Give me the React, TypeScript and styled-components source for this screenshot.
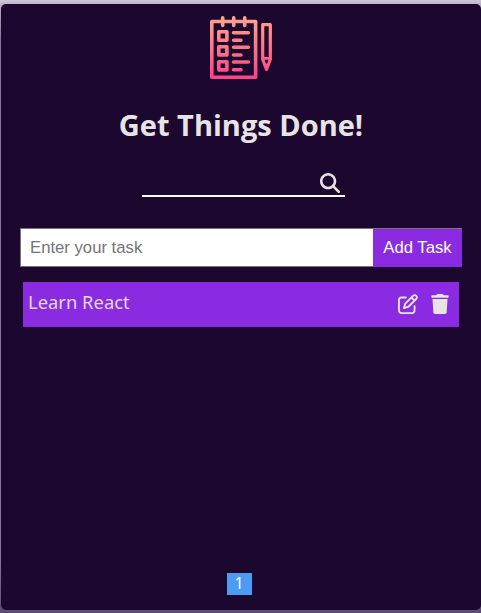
import React, { useState } from "react";
import styled, { createGlobalStyle } from "styled-components";
import { FaMagnifyingGlass, FaRegPenToSquare, FaTrash } from "react-icons/fa6";

const GlobalStyle = createGlobalStyle`
  * { box-sizing: border-box; }
  body {
    margin: 0;
    background: linear-gradient(#d0c8d6 0px, #b5aac0 6px, #85779a 40px, #85779a 560px, #5e4b74 613px);
    font-family: "Noto Sans", sans-serif;
  }
`;

const Page = styled.div`
  height: 613px;
  padding: 4px 0 3px 1px;
  overflow: hidden;
`;

const Card = styled.main`
  display: flex;
  flex-direction: column;
  align-items: center;
  height: 606px;
  padding: 12px 19px 15px;
  background: #1c072f;
  border-radius: 5px;
  color: #e8e3e5;
`;

const Title = styled.h1`
  margin: 22px 0 0;
  font-family: "Open Sans", "Noto Sans", sans-serif;
  font-size: 29px;
  line-height: 46px;
  font-weight: 700;
  white-space: nowrap;
`;

const SearchBar = styled.label`
  display: flex;
  align-items: flex-end;
  width: 203px;
  height: 28px;
  margin: 21px 0 0 5px;
  padding: 0 5px 2px 0;
  border-bottom: 2px solid #fff;
  svg { flex: none; font-size: 20px; }
`;

const SearchInput = styled.input`
  flex: 1;
  min-width: 0;
  border: 0;
  outline: 0;
  background: transparent;
  color: inherit;
`;

const TaskForm = styled.form`
  display: flex;
  align-self: stretch;
  height: 39px;
  margin-top: 31px;
  border-top: 1px solid #767676;
`;

const TaskInput = styled.input`
  flex: 1;
  min-width: 0;
  padding: 0 9px;
  border: 1px solid #767676;
  border-width: 0 0 1px 1px;
  border-radius: 0;
  outline: 0;
  background: #fff;
  font: 16.7px "Liberation Sans", Arial, sans-serif;
  &::placeholder { color: #757575; }
`;

const AddButton = styled.button`
  width: 89px;
  padding: 0;
  border: 0;
  background: #8a2be2;
  color: #fff;
  font: 16.7px "Liberation Sans", Arial, sans-serif;
`;

const TaskList = styled.ul`
  align-self: stretch;
  flex: 1;
  margin: 15px 3px 0;
  padding: 0;
  list-style: none;
`;

const TaskRow = styled.li`
  display: flex;
  align-items: center;
  gap: 12px;
  height: 45px;
  padding: 0 9px 1px 5px;
  background: #8a2be2;
  svg { display: block; font-size: 20px; }
`;

const TaskName = styled.span`
  flex: 1;
  padding-bottom: 4px;
  font-size: 18.4px;
  line-height: 26px;
  color: #e2d8e6;
`;

const IconButton = styled.button`
  padding: 0;
  border: 0;
  background: none;
  color: #e8e3e5;
`;

const PageNumber = styled.button`
  width: 25px;
  height: 22px;
  padding: 0;
  margin-right: 4px;
  border: 0;
  background: #4c9bf5;
  color: #fff;
  font: 16px/20px "Noto Sans", sans-serif;
  padding-bottom: 2px;
`;

function NotebookLogo() {
  return (
    <svg width="64" height="64" viewBox="0 0 64 64" fill="none" stroke="url(#warm)" strokeWidth="3.6" strokeLinejoin="round" strokeLinecap="round">
      <defs>
        <linearGradient id="warm" gradientUnits="userSpaceOnUse" x1="0" y1="0" x2="0" y2="64">
          <stop offset="0" stopColor="#ffa68a" />
          <stop offset="0.5" stopColor="#ff7488" />
          <stop offset="1" stopColor="#ff3f86" />
        </linearGradient>
      </defs>
      <path d="M2.8 5.5H46.6V61.2H2.8Z" />
      <path d="M13.7 1.8V9.5M24.7 1.8V9.5M35.7 1.8V9.5" />
      <path d="M9.8 15.8H17.9V24.2H9.8ZM9.8 30.8H17.9V38.9H9.8ZM9.8 45.8H17.9V53.9H9.8Z" />
      <path d="M24.5 16.7H39.3M24.5 24.3H31.9M24.5 31.3H39.3M24.5 39H31.9M24.5 46H39.3M24.5 53.7H31.9" />
      <path d="M53.7 8.7H61.3V43.5L57.5 53.5L53.7 43.5Z" strokeWidth="3.2" />
      <path d="M54 42.3H61M57.5 49V53" strokeWidth="2.8" />
    </svg>
  );
}

export default function App() {
  const [draft, setDraft] = useState("");
  const [query, setQuery] = useState("");
  const [tasks, setTasks] = useState(["Learn React"]);

  const addTask = (event: React.FormEvent) => {
    event.preventDefault();
    if (!draft.trim()) return;
    setTasks([...tasks, draft.trim()]);
    setDraft("");
  };

  return (
    <Page>
      <GlobalStyle />
      <Card>
        <NotebookLogo />
        <Title>Get Things Done!</Title>
        <SearchBar>
          <SearchInput aria-label="Search" value={query} onChange={(e) => setQuery(e.target.value)} />
          <FaMagnifyingGlass />
        </SearchBar>
        <TaskForm onSubmit={addTask}>
          <TaskInput placeholder="Enter your task" value={draft} onChange={(e) => setDraft(e.target.value)} />
          <AddButton>Add Task</AddButton>
        </TaskForm>
        <TaskList>
          {tasks.filter((task) => task.toLowerCase().includes(query.toLowerCase())).map((task) => (
            <TaskRow key={task}>
              <TaskName>{task}</TaskName>
              <IconButton aria-label="Edit"><FaRegPenToSquare /></IconButton>
              <IconButton aria-label="Delete" onClick={() => setTasks(tasks.filter((t) => t !== task))}><FaTrash /></IconButton>
            </TaskRow>
          ))}
        </TaskList>
        <PageNumber>1</PageNumber>
      </Card>
    </Page>
  );
}
